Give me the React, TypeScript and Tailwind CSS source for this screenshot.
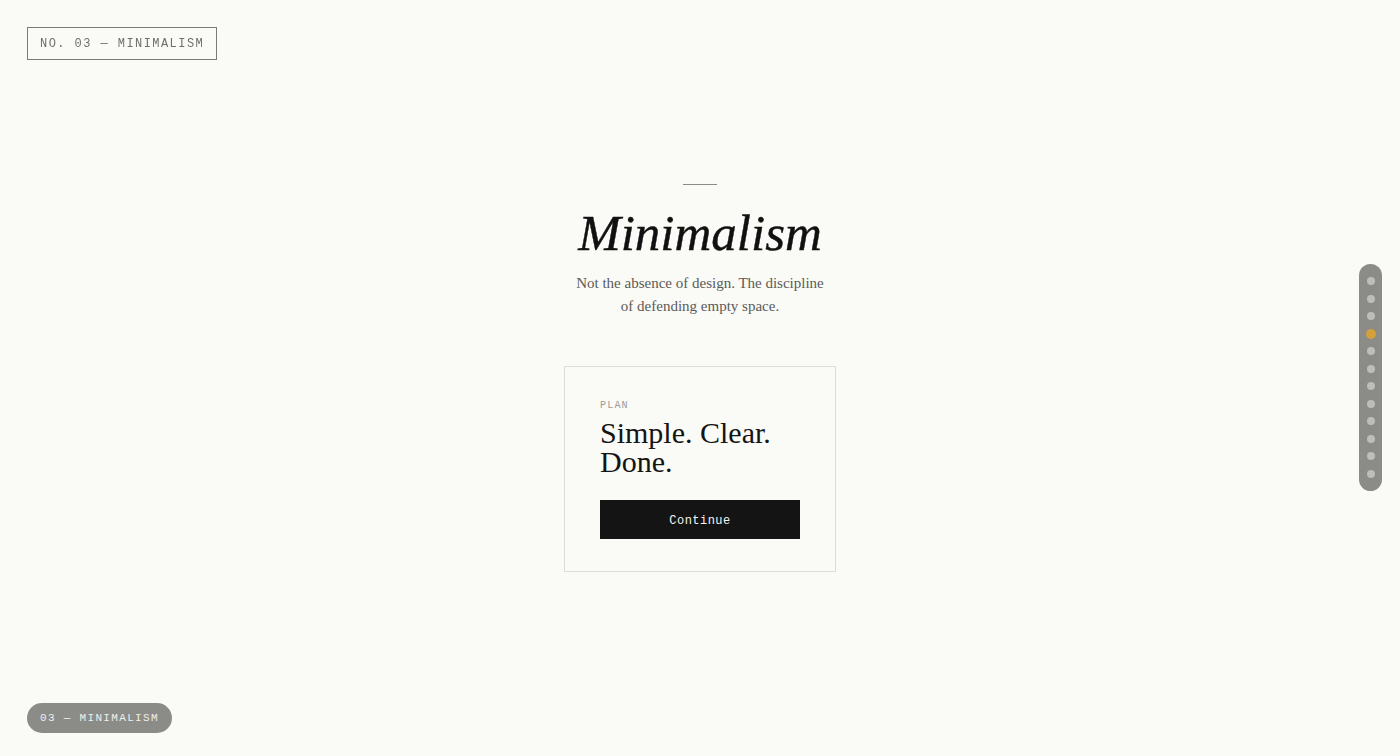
import React from 'react';

const dots = Array.from({ length: 12 }, (_, i) => i);

const SideNav: React.FC<{ active: number }> = ({ active }) => (
    <nav className="fixed right-[18px] top-[264px] w-[23px] rounded-full bg-[#8b8b88] py-[13px] flex flex-col items-center gap-[9.5px]">
        {dots.map((i) => (
            <span
                key={i}
                className={
                    i === active
                        ? 'block w-[10px] h-[10px] -my-[1px] rounded-full bg-[#d4a03a]'
                        : 'block w-[8px] h-[8px] rounded-full bg-[#bdbdba]'
                }
            />
        ))}
    </nav>
);

const App: React.FC = () => {
    return (
        <div className="relative min-h-[756px] h-screen w-full bg-[#fafaf6] overflow-hidden">
            <div className="fixed left-[27px] top-[27px] h-[33px] px-[12px] flex items-center border border-[#7a7a78] font-['Liberation_Mono',monospace] text-[12px] tracking-[0.12em] text-[#6f6f6c]">
                NO. 03 — MINIMALISM
            </div>

            <main className="h-full flex flex-col items-center justify-center font-['Liberation_Serif',serif]">
                <div className="w-[34px] h-px bg-[#8a8a86]" />
                <h1 className="mt-[18px] text-[51px] leading-[60px] italic text-[#111111] [-webkit-text-stroke:0.4px_#111111]">
                    Minimalism
                </h1>
                <p className="mt-[9px] max-w-[256px] text-center text-[15px] leading-[23px] text-[#5a5a57]">
                    Not the absence of design. The discipline of defending empty space.
                </p>

                <div className="mt-[48px] w-[272px] border border-[#dcdcd8] px-[35px] pt-[33px] pb-[32px]">
                    <div className="font-['Liberation_Mono',monospace] text-[10px] leading-[12px] tracking-[0.12em] text-[#9a9a97]">
                        PLAN
                    </div>
                    <h2 className="mt-[6px] text-[30px] leading-[29px] text-[#141414]">
                        Simple. Clear. Done.
                    </h2>
                    <button className="mt-[24px] w-[200px] h-[39px] bg-[#141414] pt-[3px] font-['Liberation_Mono',monospace] text-[12px] tracking-[0.04em] text-[#f5f5f0]">
                        Continue
                    </button>
                </div>
            </main>

            <SideNav active={3} />

            <div className="fixed left-[27px] bottom-[23px] h-[30px] px-[13px] flex items-center rounded-full bg-[#8b8b88] font-['Liberation_Mono',monospace] text-[11px] tracking-[0.12em] text-[#f0f0ec]">
                03 — MINIMALISM
            </div>
        </div>
    );
};

export default App;
